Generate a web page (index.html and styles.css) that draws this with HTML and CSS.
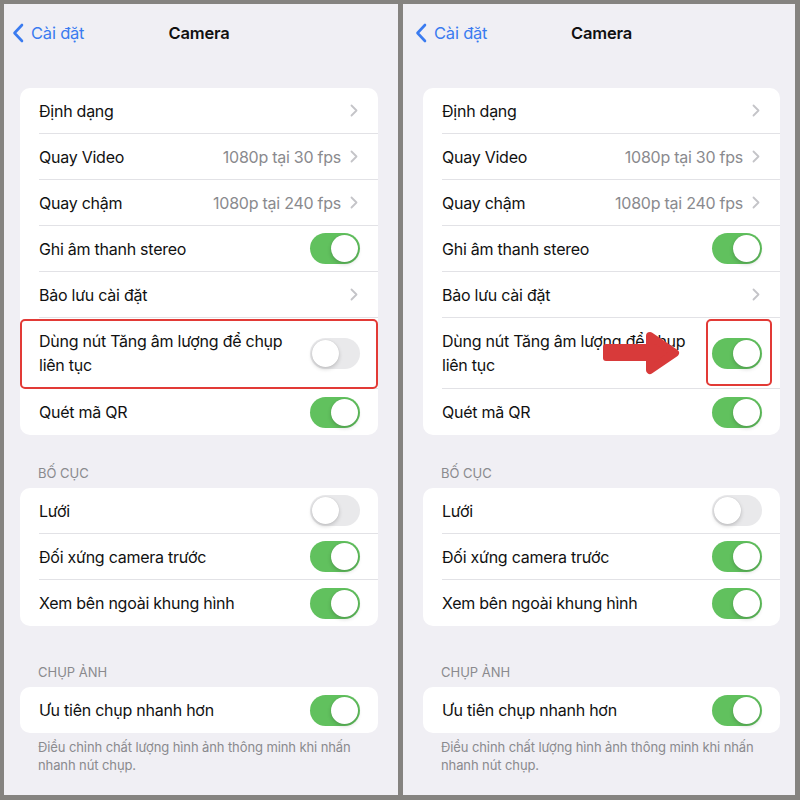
FILE: index.html
```html
<html>
   <head>
      <title>Camera</title>
      <link rel="stylesheet" href="styles.css">
   </head>
   <body>
      <div class="frame">
         <div class="panel panel-left">
            <div class="nav">
               <div class="back">
                  <svg width="12" height="20" viewBox="0 0 12 20"><path d="M10 2 L2.5 10 L10 18" fill="none" stroke="#3a7bf0" stroke-width="2.6" stroke-linecap="round" stroke-linejoin="round"/></svg>
                  <span>Cài đặt</span>
               </div>
               <div class="title">Camera</div>
            </div>
            <div class="card">
               <div class="row"><div class="cell"><span class="label">Định dạng</span><span class="chev"><svg width="8" height="13" viewBox="0 0 8 13"><path d="M1.5 1.5 L6.5 6.5 L1.5 11.5" fill="none" stroke="#c4c4c8" stroke-width="1.8" stroke-linecap="round" stroke-linejoin="round"/></svg></span></div></div>
               <div class="row"><div class="cell"><span class="label">Quay Video</span><span class="value">1080p tại 30 fps</span><span class="chev"><svg width="8" height="13" viewBox="0 0 8 13"><path d="M1.5 1.5 L6.5 6.5 L1.5 11.5" fill="none" stroke="#c4c4c8" stroke-width="1.8" stroke-linecap="round" stroke-linejoin="round"/></svg></span></div></div>
               <div class="row"><div class="cell"><span class="label">Quay chậm</span><span class="value">1080p tại 240 fps</span><span class="chev"><svg width="8" height="13" viewBox="0 0 8 13"><path d="M1.5 1.5 L6.5 6.5 L1.5 11.5" fill="none" stroke="#c4c4c8" stroke-width="1.8" stroke-linecap="round" stroke-linejoin="round"/></svg></span></div></div>
               <div class="row"><div class="cell"><span class="label">Ghi âm thanh stereo</span><span class="toggle on"></span></div></div>
               <div class="row"><div class="cell"><span class="label">Bảo lưu cài đặt</span><span class="chev"><svg width="8" height="13" viewBox="0 0 8 13"><path d="M1.5 1.5 L6.5 6.5 L1.5 11.5" fill="none" stroke="#c4c4c8" stroke-width="1.8" stroke-linecap="round" stroke-linejoin="round"/></svg></span></div></div>
               <div class="row tall marked"><div class="cell"><span class="label">Dùng nút Tăng âm lượng để chụp<br>liên tục</span><span class="toggle"></span></div></div>
               <div class="row"><div class="cell last"><span class="label">Quét mã QR</span><span class="toggle on"></span></div></div>
            </div>
            <div class="section-head">BỐ CỤC</div>
            <div class="card">
               <div class="row"><div class="cell"><span class="label">Lưới</span><span class="toggle"></span></div></div>
               <div class="row"><div class="cell"><span class="label">Đối xứng camera trước</span><span class="toggle on"></span></div></div>
               <div class="row"><div class="cell last"><span class="label">Xem bên ngoài khung hình</span><span class="toggle on"></span></div></div>
            </div>
            <div class="section-head second">CHỤP ẢNH</div>
            <div class="card">
               <div class="row"><div class="cell last"><span class="label">Ưu tiên chụp nhanh hơn</span><span class="toggle on"></span></div></div>
            </div>
            <div class="section-foot">Điều chỉnh chất lượng hình ảnh thông minh khi nhấn<br>nhanh nút chụp.</div>
         </div>

         <div class="panel panel-right">
            <div class="nav">
               <div class="back">
                  <svg width="12" height="20" viewBox="0 0 12 20"><path d="M10 2 L2.5 10 L10 18" fill="none" stroke="#3a7bf0" stroke-width="2.6" stroke-linecap="round" stroke-linejoin="round"/></svg>
                  <span>Cài đặt</span>
               </div>
               <div class="title">Camera</div>
            </div>
            <div class="card">
               <div class="row"><div class="cell"><span class="label">Định dạng</span><span class="chev"><svg width="8" height="13" viewBox="0 0 8 13"><path d="M1.5 1.5 L6.5 6.5 L1.5 11.5" fill="none" stroke="#c4c4c8" stroke-width="1.8" stroke-linecap="round" stroke-linejoin="round"/></svg></span></div></div>
               <div class="row"><div class="cell"><span class="label">Quay Video</span><span class="value">1080p tại 30 fps</span><span class="chev"><svg width="8" height="13" viewBox="0 0 8 13"><path d="M1.5 1.5 L6.5 6.5 L1.5 11.5" fill="none" stroke="#c4c4c8" stroke-width="1.8" stroke-linecap="round" stroke-linejoin="round"/></svg></span></div></div>
               <div class="row"><div class="cell"><span class="label">Quay chậm</span><span class="value">1080p tại 240 fps</span><span class="chev"><svg width="8" height="13" viewBox="0 0 8 13"><path d="M1.5 1.5 L6.5 6.5 L1.5 11.5" fill="none" stroke="#c4c4c8" stroke-width="1.8" stroke-linecap="round" stroke-linejoin="round"/></svg></span></div></div>
               <div class="row"><div class="cell"><span class="label">Ghi âm thanh stereo</span><span class="toggle on"></span></div></div>
               <div class="row"><div class="cell"><span class="label">Bảo lưu cài đặt</span><span class="chev"><svg width="8" height="13" viewBox="0 0 8 13"><path d="M1.5 1.5 L6.5 6.5 L1.5 11.5" fill="none" stroke="#c4c4c8" stroke-width="1.8" stroke-linecap="round" stroke-linejoin="round"/></svg></span></div></div>
               <div class="row tall">
                  <div class="cell"><span class="label">Dùng nút Tăng âm lượng để chụp<br>liên tục</span><span class="toggle on boxed"></span></div>
                  <svg class="arrow" width="80" height="46" viewBox="0 0 80 46">
                     <path d="M4 14 H52 V31 H4 Q1 31 1 28 V17 Q1 14 4 14 Z" fill="#d83a3a"/>
                     <polygon points="48,6 73,23 48,40" fill="#d83a3a" stroke="#d83a3a" stroke-width="8" stroke-linejoin="round"/>
                  </svg>
               </div>
               <div class="row"><div class="cell last"><span class="label">Quét mã QR</span><span class="toggle on"></span></div></div>
            </div>
            <div class="section-head">BỐ CỤC</div>
            <div class="card">
               <div class="row"><div class="cell"><span class="label">Lưới</span><span class="toggle"></span></div></div>
               <div class="row"><div class="cell"><span class="label">Đối xứng camera trước</span><span class="toggle on"></span></div></div>
               <div class="row"><div class="cell last"><span class="label">Xem bên ngoài khung hình</span><span class="toggle on"></span></div></div>
            </div>
            <div class="section-head second">CHỤP ẢNH</div>
            <div class="card">
               <div class="row"><div class="cell last"><span class="label">Ưu tiên chụp nhanh hơn</span><span class="toggle on"></span></div></div>
            </div>
            <div class="section-foot">Điều chỉnh chất lượng hình ảnh thông minh khi nhấn<br>nhanh nút chụp.</div>
         </div>
      </div>
   </body>
</html>
```

FILE: styles.css
```css
body {
   margin: 0;
   background: #858380;
   font-family: Inter, "Noto Sans", sans-serif;
   color: #111;
}
.frame {
   display: flex;
   gap: 5px;
   padding: 4px 5px 5px 4px;
   height: 791px;
}
.panel {
   background: #f0eff4;
   height: 791px;
   box-sizing: border-box;
   overflow: hidden;
}
.panel-left {
   width: 394px;
   padding: 0 20px 0 16px;
}
.panel-right {
   width: 392px;
   padding: 0 15px 0 20px;
}
.nav {
   position: relative;
   height: 58px;
   display: flex;
   align-items: center;
   justify-content: center;
   margin-bottom: 26px;
}
.back {
   position: absolute;
   left: -8px;
   top: 19px;
   display: flex;
   align-items: center;
   gap: 7px;
   color: #3a7bf0;
   font-size: 16.5px;
   letter-spacing: -0.2px;
}
.title {
   font-size: 16.5px;
   font-weight: 600;
   letter-spacing: -0.2px;
}
.card {
   background: #fff;
   border-radius: 10px;
}
.row {
   position: relative;
   padding-left: 19px;
   height: 46px;
}
.row.tall {
   height: 71px;
}
.cell {
   height: 100%;
   display: flex;
   align-items: center;
   padding-right: 18px;
   border-bottom: 1px solid #e2e2e6;
   box-sizing: border-box;
   font-size: 16px;
   letter-spacing: -0.25px;
}
.cell.last {
   border-bottom: none;
}
.tall .label {
   line-height: 24px;
}
.label {
   flex: 1;
}
.value {
   color: #8a8a8e;
   margin-right: 9px;
}
.chev {
   display: flex;
   padding-right: 2px;
}
.toggle {
   position: relative;
   width: 50px;
   height: 31px;
   border-radius: 16px;
   background: #e9e9eb;
   flex-shrink: 0;
}
.toggle::after {
   content: "";
   position: absolute;
   top: 2px;
   left: 2px;
   width: 27px;
   height: 27px;
   border-radius: 50%;
   background: #fff;
   box-shadow: 0 2px 4px rgba(0, 0, 0, 0.18), 0 0 1px rgba(0, 0, 0, 0.15);
}
.toggle.on {
   background: #61c15e;
}
.toggle.on::after {
   left: 21px;
}
.marked::before {
   content: "";
   position: absolute;
   left: 0;
   right: 0;
   top: 1px;
   bottom: 0;
   border: 2px solid #e23a36;
   border-radius: 5px;
   z-index: 1;
}
.boxed::before {
   content: "";
   position: absolute;
   left: -6px;
   right: -10px;
   top: -19px;
   bottom: -17px;
   border: 2px solid #e23a36;
   border-radius: 5px;
}
.arrow {
   position: absolute;
   left: 179px;
   top: 12px;
}
.section-head {
   margin: 30px 0 7px 18px;
   font-size: 13px;
   line-height: 16px;
   color: #8a8a8e;
}
.section-head.second {
   margin-top: 38px;
}
.section-foot {
   margin: 5px 0 0 18px;
   font-size: 13px;
   line-height: 18px;
   color: #8a8a8e;
   letter-spacing: -0.1px;
}
```
